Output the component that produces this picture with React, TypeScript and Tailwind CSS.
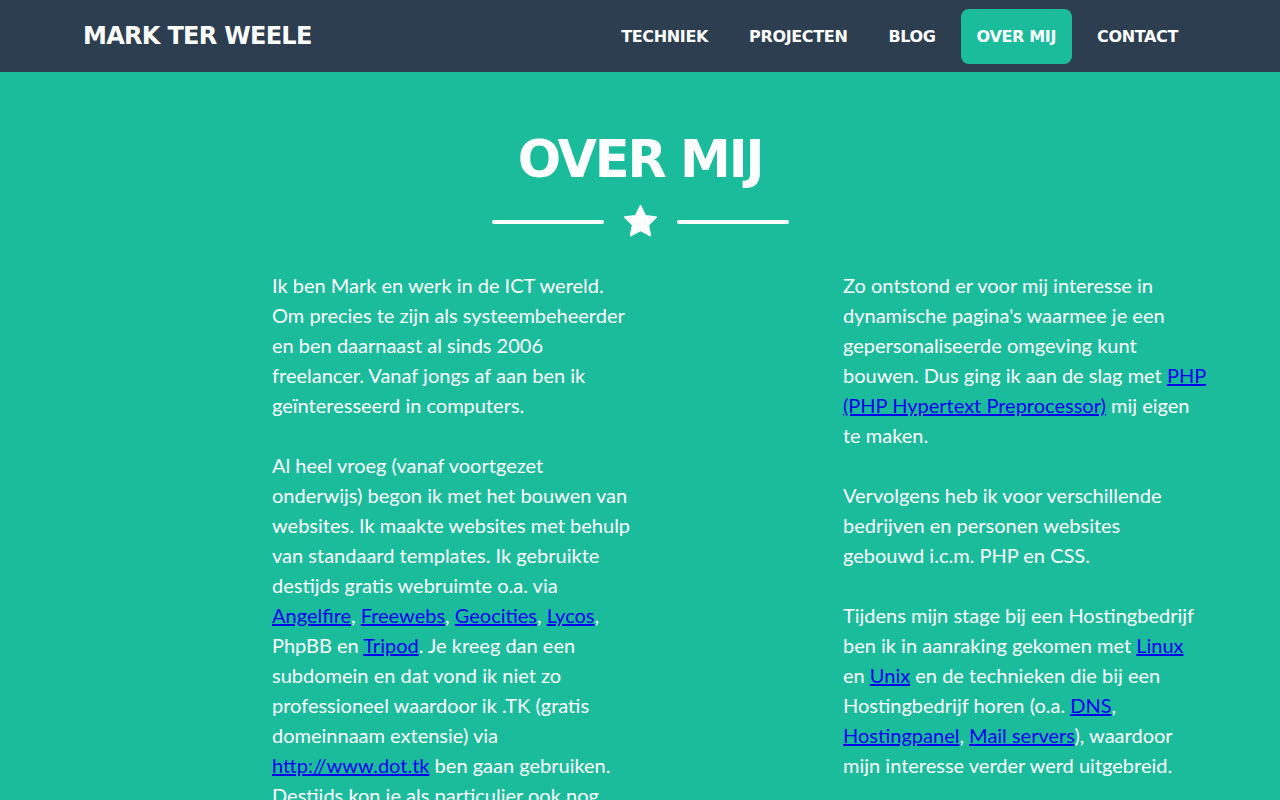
import type { ReactNode } from "react";

const heading = "font-['DejaVu_Sans',sans-serif] font-bold uppercase";

const navItems = ["Techniek", "Projecten", "Blog", "Over mij", "Contact"];

const A = ({ children }: { children: ReactNode }) => (
  <a href="#" className="text-[#0000ee] underline">
    {children}
  </a>
);

const Star = () => (
  <svg viewBox="0 0 24 24" className="w-[37px] h-[37px] mx-[18px]" fill="white">
    <path
      d="M12 1.8l3.1 6.5 7 .9-5.1 4.9 1.3 7-6.3-3.4-6.3 3.4 1.3-7L1.9 9.2l7-.9z"
      stroke="white"
      strokeWidth="1.2"
      strokeLinejoin="round"
    />
  </svg>
);

export default function App() {
  return (
    <div className="min-h-screen bg-[#1abc9c] font-['Lato',sans-serif] text-white">
      {/* navigatie */}
      <nav className="bg-[#2c3e50] h-[72px]">
        <div className="max-w-[1140px] mx-auto px-[13px] h-full flex items-center justify-between">
          <a href="#" className={`${heading} text-[24px] text-white tracking-[-0.7px]`}>
            Mark ter Weele
          </a>
          <ul className="flex items-center gap-[9px] pr-[3px]">
            {navItems.map((item) => (
              <li key={item}>
                <a
                  href="#"
                  className={`${heading} block text-[16px] tracking-[-0.35px] px-4 leading-[55px] rounded-lg ${
                    item === "Over mij" ? "bg-[#1abc9c]" : ""
                  }`}
                >
                  {item}
                </a>
              </li>
            ))}
          </ul>
        </div>
      </nav>

      {/* over mij */}
      <section className="pt-[56px] pb-20">
        <h2 className={`${heading} text-center text-[51px] leading-[64px] tracking-[-2.2px]`}>
          Over mij
        </h2>
        <div className="flex items-center justify-center mt-[11px]">
          <span className="w-[112px] h-1 rounded-full bg-white" />
          <Star />
          <span className="w-[112px] h-1 rounded-full bg-white" />
        </div>

        <div className="max-w-[1140px] mx-auto flex mt-[30px] text-[20px] leading-[30px]">
          <div className="ml-[202px] w-[360px]">
            <p className="mb-[30px]">
              Ik ben Mark en werk in de ICT wereld. Om precies te zijn als
              systeembeheerder en ben daarnaast al sinds 2006 freelancer. Vanaf
              jongs af aan ben ik geïnteresseerd in computers.
            </p>
            <p className="mb-[30px]">
              Al heel vroeg (vanaf voortgezet onderwijs) begon ik met het bouwen
              van websites. Ik maakte websites met behulp van standaard
              templates. Ik gebruikte destijds gratis webruimte o.a. via{" "}
              <A>Angelfire</A>, <A>Freewebs</A>, <A>Geocities</A>, <A>Lycos</A>,
              PhpBB en <A>Tripod</A>. Je kreeg dan een subdomein en dat vond ik
              niet zo professioneel waardoor ik .TK (gratis domeinnaam extensie)
              via <A>http://www.dot.tk</A> ben gaan gebruiken. Destijds kon je
              als particulier ook nog geen .NL domeinnaam registreren.
            </p>
          </div>
          <div className="ml-[211px] w-[366px]">
            <p className="mb-[30px]">
              Zo ontstond er voor mij interesse in dynamische pagina's waarmee
              je een gepersonaliseerde omgeving kunt bouwen. Dus ging ik aan de
              slag met <A>PHP (PHP Hypertext Preprocessor)</A> mij eigen te
              maken.
            </p>
            <p className="mb-[30px] pr-[12px]">
              Vervolgens heb ik voor verschillende bedrijven en personen
              websites gebouwd i.c.m. PHP en CSS.
            </p>
            <p className="mb-[30px]">
              Tijdens mijn stage bij een Hostingbedrijf ben ik in aanraking
              gekomen met <A>Linux</A> en <A>Unix</A> en de technieken die bij
              een Hostingbedrijf horen (o.a. <A>DNS</A>, <A>Hostingpanel</A>,{" "}
              <A>Mail servers</A>), waardoor mijn interesse verder werd
              uitgebreid.
            </p>
          </div>
        </div>
      </section>
    </div>
  );
}
